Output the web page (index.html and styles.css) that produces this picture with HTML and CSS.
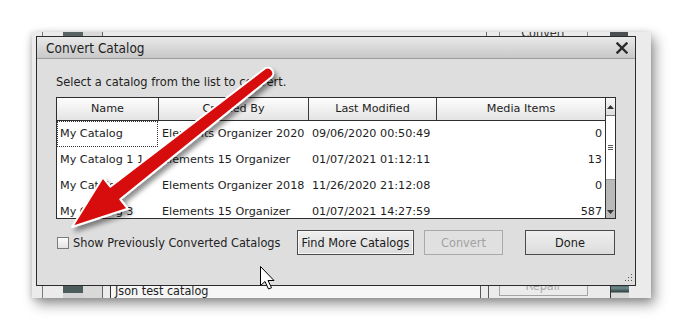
FILE: index.html
```html
<!DOCTYPE html>
<html>
<head>
<meta charset="utf-8">
<title>Convert Catalog</title>
<link rel="stylesheet" href="styles.css">
</head>
<body>
<div class="shot">
  <div class="bgapp">
    <div class="bg-row bg-top">
      <span class="bg-line"></span>
      <span class="bg-gap"></span>
      <span class="bg-thumb"></span>
      <span class="bg-panel"></span>
      <span class="bg-fill"></span>
      <span class="bg-sep"></span>
      <span class="bg-btn">Convert</span>
      <span class="bg-gap2"></span>
      <span class="bg-thumb2"></span>
      <span class="bg-tail"></span>
    </div>
    <div class="bg-row bg-bottom">
      <span class="bg-line"></span>
      <span class="bg-gap"></span>
      <span class="bg-thumb"></span>
      <span class="bg-panel"></span>
      <span class="bg-narrow"></span>
      <span class="bg-field">Json test catalog</span>
      <span class="bg-narrow2"></span>
      <span class="bg-btncell"><span class="bg-btn disabled">Repair</span></span>
      <span class="bg-thumb3"></span>
      <span class="bg-tail"></span>
    </div>
  </div>

  <div class="dialog">
    <div class="titlebar">
      <span class="title">Convert Catalog</span>
      <svg class="close" width="12" height="12" viewBox="0 0 12 12"><path d="M1.5 1.5L10.5 10.5M10.5 1.5L1.5 10.5" stroke="#2a2a2a" stroke-width="2.4" stroke-linecap="square"/></svg>
    </div>
    <div class="dlg-body">
      <p class="prompt">Select a catalog from the list to convert.</p>
      <div class="list">
        <div class="grid">
          <div class="hdr">
            <span>Name</span><span>Created By</span><span>Last Modified</span><span>Media Items</span>
          </div>
          <div class="row">
            <span class="focus">My Catalog</span><span>Elements Organizer 2020</span><span>09/06/2020 00:50:49</span><span class="num">0</span>
          </div>
          <div class="row">
            <span>My Catalog 1 1</span><span>Elements 15 Organizer</span><span>01/07/2021 01:12:11</span><span class="num">13</span>
          </div>
          <div class="row">
            <span>My Catalog 2</span><span>Elements Organizer 2018</span><span>11/26/2020 21:12:08</span><span class="num">0</span>
          </div>
          <div class="row">
            <span>My Catalog 3</span><span>Elements 15 Organizer</span><span>01/07/2021 14:27:59</span><span class="num">587</span>
          </div>
        </div>
        <div class="scrollbar">
          <div class="sb-up"><svg width="7" height="4" viewBox="0 0 7 4"><path d="M0 4L3.5 0L7 4Z" fill="#333"/></svg></div>
          <div class="sb-thumb"><svg width="5" height="5" viewBox="0 0 5 5"><path d="M0 .5H5M0 2.5H5M0 4.5H5" stroke="#555" stroke-width="1"/></svg></div>
          <div class="sb-track"></div>
          <div class="sb-down"><svg width="7" height="4" viewBox="0 0 7 4"><path d="M0 0L3.5 4L7 0Z" fill="#333"/></svg></div>
        </div>
      </div>
      <div class="actions">
        <span class="check"></span>
        <span class="check-label">Show Previously Converted Catalogs</span>
        <button class="btn find">Find More Catalogs</button>
        <button class="btn convert" disabled>Convert</button>
        <button class="btn done">Done</button>
      </div>
    </div>
    <svg class="grip" width="8" height="8" viewBox="0 0 8 8">
      <g fill="#555"><rect x="6" y="0" width="1" height="1"/><rect x="6" y="3" width="1" height="1"/><rect x="3" y="3" width="1" height="1"/><rect x="6" y="6" width="1" height="1"/><rect x="3" y="6" width="1" height="1"/><rect x="0" y="6" width="1" height="1"/></g>
    </svg>
  </div>
</div>

<svg class="annot" width="683" height="330" viewBox="0 0 683 330">
  <defs>
    <filter id="sh" x="-20%" y="-20%" width="150%" height="150%">
      <feDropShadow dx="3" dy="4" stdDeviation="2.5" flood-color="#000" flood-opacity="0.45"/>
    </filter>
  </defs>
  <path filter="url(#sh)" d="M102.9,177.3 L110.3,186.7 L264.6,68.7 A5.5,5.5 0 0 1 271.4,77.3 L120.3,199.3 L127.7,208.7 L72,227 Z" fill="#d70a0c" stroke="#fff" stroke-width="2" stroke-linejoin="round"/>
  <path transform="translate(260.5,266.5)" d="M0,0 L0,19 L4.5,15 L8,22.5 L11,21.3 L7.5,14 L13.5,14 Z" fill="#fff" stroke="#000" stroke-width="1" stroke-linejoin="miter"/>
</svg>
</body>
</html>
```

FILE: styles.css
```css
* { box-sizing: border-box; }
html, body { margin: 0; padding: 0; background: #fff; }
body {
  width: 683px;
  height: 330px;
  overflow: hidden;
  position: relative;
  font-family: "DejaVu Sans", sans-serif;
  color: #1f1f1f;
}

.shot {
  position: relative;
  margin: 32px 0 0 32px;
  width: 619px;
  height: 266px;
  background: #ebebeb;
  overflow: hidden;
  box-shadow: 4px 6px 12px rgba(0,0,0,.42), -1px 1px 6px rgba(0,0,0,.15);
}

/* background application */
.bgapp { height: 100%; display: flex; flex-direction: column; justify-content: space-between; }
.bg-row { display: flex; align-items: stretch; flex: none; }
.bg-top { height: 26px; margin-top: -12px; }
.bg-bottom { height: 14px; }
.bg-row > span { flex: none; }
.bg-line { width: 11px; border-right: 1px solid #7a7a7a; }
.bg-gap { width: 20px; }
.bg-thumb { width: 20px; background: #5a6363; }
.bg-bottom .bg-thumb { background: linear-gradient(#4c5b5b 0 9px, #d4d4d4 9px); }
.bg-panel { width: 20px; background: #d9d9d9; border-right: 1px solid #666; }
.bg-fill { flex: 1 !important; }
.bg-sep { width: 13px; border-left: 1px solid #6a6a6a; }
.bg-btn {
  width: 89px;
  border: 1px solid #8a8a8a;
  font: 12.5px "DejaVu Sans Condensed", "DejaVu Sans", sans-serif;
  font-stretch: condensed;
  text-align: center;
  line-height: 24px;
  color: #333;
}
.bg-gap2 { width: 22px; }
.bg-thumb2 { width: 18px; background: #4a4f52; }
.bg-tail { width: 23px; }
.bg-narrow { width: 8px; border-right: 1px solid #333; }
.bg-field {
  flex: 1 !important;
  background: #f6f6f6;
  border-right: 1px solid #555;
  padding-left: 4px;
  font: 12.5px "DejaVu Sans Condensed", "DejaVu Sans", sans-serif;
  font-stretch: condensed;
  line-height: 14px;
  color: #222;
}
.bg-narrow2 { width: 8px; border-right: 1px solid #555; }
.bg-btncell { width: 122px; border-right: 1px solid #333; padding-left: 10px; display: flex; }
.bg-btn.disabled { color: #a8a8a8; border-color: #a4a4a4; height: 12px; line-height: 4px; border-top: none; }
.bg-thumb3 { width: 18px; background: linear-gradient(#3e5456 0, #6f8a8c 4px, #2f4244 8px, #d8d8d8 9px); }
.bg-bottom .bg-tail { width: 22px; }

/* dialog window */
.dialog {
  position: absolute;
  left: 4px;
  top: 4px;
  width: 600px;
  height: 250px;
  border: 1px solid #2b2b2b;
  background: #dedede;
  display: flex;
  flex-direction: column;
}
.titlebar {
  height: 22px;
  flex: none;
  border-bottom: 1px solid #9c9c9c;
  background: linear-gradient(#e9e9e9, #c8c8c8);
  display: flex;
  align-items: center;
  justify-content: space-between;
  padding: 0 7px 0 9px;
}
.title {
  font: 13.5px "DejaVu Sans Condensed", "DejaVu Sans", sans-serif;
  font-stretch: condensed;
  color: #1e1e1e;
}
.close { display: block; }

.dlg-body {
  flex: 1;
  padding: 15px 19px 0 19px;
  display: flex;
  flex-direction: column;
}
.prompt {
  margin: 0 0 7px;
  font: 12.7px "DejaVu Sans Condensed", "DejaVu Sans", sans-serif;
  font-stretch: condensed;
  line-height: 16px;
  color: #222;
}

.list {
  display: flex;
  height: 122px;
  border: 1px solid #2e2e2e;
  background: #fff;
  flex: none;
}
.grid { flex: 1; overflow: hidden; font-size: 11.2px; color: #1d1d1d; }
.hdr, .row { display: grid; grid-template-columns: 102px 150px 128px 168px; }
.hdr {
  height: 23px;
  border-bottom: 1px solid #2e2e2e;
  background: linear-gradient(#fdfdfd, #e4e4e4);
}
.hdr span {
  border-right: 1px solid #3a3a3a;
  text-align: center;
  line-height: 22px;
  white-space: nowrap;
}
.hdr span:last-child { border-right: none; }
.row { height: 26px; }
.row span {
  padding: 0 3px;
  line-height: 26px;
  white-space: nowrap;
  overflow: hidden;
}
.row .num { text-align: right; }
.row .focus { outline: 1px dotted #333; outline-offset: -1px; width: 101px; }

.scrollbar {
  width: 10px;
  border-left: 1px solid #333;
  display: flex;
  flex-direction: column;
  flex: none;
}
.sb-up {
  height: 18px;
  background: linear-gradient(#f7f7f7, #dedede);
  border-bottom: 1px solid #777;
  display: flex;
  align-items: center;
  justify-content: center;
}
.sb-thumb {
  height: 64px;
  background: #fff;
  border-bottom: 1px solid #9a9a9a;
  display: flex;
  align-items: center;
  justify-content: center;
}
.sb-track { flex: 1; background: #b9b9b9; }
.sb-down {
  height: 12px;
  background: #b9b9b9;
  display: flex;
  align-items: center;
  justify-content: center;
}
.scrollbar svg { display: block; }

.actions {
  margin-top: 11px;
  height: 25px;
  display: flex;
  align-items: center;
  padding-right: 1px;
  font: 12.6px "DejaVu Sans Condensed", "DejaVu Sans", sans-serif;
  font-stretch: condensed;
  color: #222;
}
.check {
  width: 12px;
  height: 12px;
  margin-left: 1px;
  border: 1px solid #7c7c7c;
  background: linear-gradient(#fdfdfd, #e2e2e2);
  flex: none;
}
.check-label { margin-left: 4px; white-space: nowrap; }
.btn {
  height: 25px;
  border: 1px solid #4a4a4a;
  background: linear-gradient(#efefef, #dcdcdc);
  font: inherit;
  font-stretch: condensed;
  color: #1a1a1a;
  padding: 0;
  flex: none;
}
.find { width: 117px; margin-left: auto; box-shadow: inset 0 0 0 1px #f7f7f7; }
.convert { width: 79px; margin-left: 10px; color: #a2a2a2; border-color: #a9a9a9; background: #e0e0e0; }
.done { width: 90px; margin-left: 22px; }

.grip { align-self: flex-end; margin: 0 2px 3px 0; display: block; flex: none; }

.annot { position: absolute; left: 0; top: 0; pointer-events: none; }
```
